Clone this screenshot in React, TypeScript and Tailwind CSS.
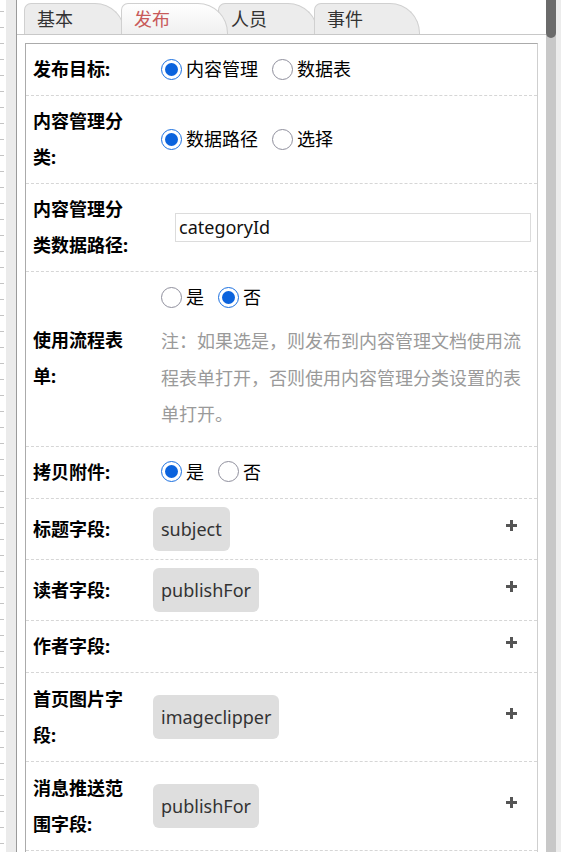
import React from "react";

const FONT = { fontFamily: '"Noto Sans", "Noto Sans CJK SC", sans-serif' };

function Radio({ checked }: { checked: boolean }) {
  if (checked) {
    return (
      <span className="ml-[8px] mr-[4px] inline-flex h-[21px] w-[21px] shrink-0 items-center justify-center rounded-full border-[1.5px] border-[#1a6fe0] bg-white">
        <span className="h-[13px] w-[13px] rounded-full bg-[#0b63dd]" />
      </span>
    );
  }
  return (
    <span className="ml-[8px] mr-[4px] inline-block h-[21px] w-[21px] shrink-0 rounded-full border border-[#8f8f9d] bg-white" />
  );
}

function RadioGroup({ items }: { items: { label: string; checked: boolean }[] }) {
  return (
    <div className="flex items-center">
      {items.map((it, i) => (
        <div key={i} className={"flex items-center " + (i > 0 ? "ml-[6px]" : "")}>
          <Radio checked={it.checked} />
          <span className="text-[18px] leading-[36px] text-black">{it.label}</span>
        </div>
      ))}
    </div>
  );
}

function Plus() {
  return (
    <svg width="11" height="11" viewBox="0 0 11 11" className="mr-[20px] -mt-[7px] shrink-0">
      <rect x="4" y="0" width="3" height="11" fill="#555" />
      <rect x="0" y="4" width="11" height="3" fill="#555" />
    </svg>
  );
}

function Chip({ text }: { text: string }) {
  return (
    <span className="inline-block h-[44px] rounded-[6px] bg-[#dedede] px-[8px] text-[18px] leading-[44px] text-[#333]">
      {text}
    </span>
  );
}

function Row({
  label,
  children,
  plus,
  className,
}: {
  label: React.ReactNode;
  children?: React.ReactNode;
  plus?: boolean;
  className?: string;
}) {
  return (
    <div
      className={
        "flex items-center border-b border-dashed border-[#d6d6d6] pt-[7px] pb-[8px] " + (className || "")
      }
    >
      <div className="w-[127px] shrink-0 pl-[7px] pr-[20px] text-[18px] font-bold leading-[36px] text-black">
        {label}
      </div>
      <div className="flex min-w-0 flex-1 items-center">{children}</div>
      {plus && <Plus />}
    </div>
  );
}

const tabs = [
  { label: "基本", w: "w-[101px]", ml: "ml-0", active: false, z: "z-[1]" },
  { label: "发布", w: "w-[107px]", ml: "-ml-[4px]", active: true, z: "z-[5]" },
  { label: "人员", w: "w-[100px]", ml: "-ml-[10px]", active: false, z: "z-[2]" },
  { label: "事件", w: "w-[106px]", ml: "-ml-[4px]", active: false, z: "z-[3]" },
];

export default function App() {
  return (
    <div className="flex h-[852px] w-[561px] overflow-hidden bg-white" style={FONT}>
      {/* left edge */}
      <div className="h-full w-[6px] shrink-0">
        <div className="h-full w-[4px] bg-[repeating-linear-gradient(to_bottom,transparent_0px,transparent_11px,#c4c4c4_11px,#c4c4c4_12px,transparent_12px,transparent_16px)]" />
      </div>
      <div className="h-full w-[11px] shrink-0 border-r border-[#9a9a9a] bg-[#ebebeb]" />

      {/* main */}
      <div className="flex h-full min-w-0 flex-1 flex-col">
        {/* tab bar */}
        <div className="flex h-[35px] shrink-0 items-end border-b border-[#c8c8c8] pl-[7px]">
          {tabs.map((t) => (
            <div
              key={t.label}
              className={
                "relative flex h-[31px] items-center rounded-tl-[7px] rounded-tr-[30px] border border-b-0 border-[#d0d0d0] pl-[12px] text-[18px] leading-none " +
                t.w +
                " " +
                t.ml +
                " " +
                t.z +
                " " +
                (t.active
                  ? "bg-gradient-to-b from-white to-[#f0f0f0] text-[#c85a5a]"
                  : "bg-[#ececec] text-[#333]")
              }
            >
              {t.label}
            </div>
          ))}
        </div>

        {/* form box */}
        <div className="ml-[8px] mr-[8px] mt-[8px] flex-1 border border-b-0 border-[#ababab] border-r-[#cfcfcf]">
          <Row label="发布目标:" className="pt-[6px] pb-[6px]">
            <RadioGroup
              items={[
                { label: "内容管理", checked: true },
                { label: "数据表", checked: false },
              ]}
            />
          </Row>
          <Row label="内容管理分类:">
            <RadioGroup
              items={[
                { label: "数据路径", checked: true },
                { label: "选择", checked: false },
              ]}
            />
          </Row>
          <Row label="内容管理分类数据路径:">
            <div className="ml-[22px] mr-[6px] flex h-[29px] flex-1 items-center border border-[#dcdcdc] bg-white pl-[3px] text-[18px] text-[#111]">
              categoryId
            </div>
          </Row>
          <Row label="使用流程表单:">
            <div className="flex flex-col">
              <RadioGroup
                items={[
                  { label: "是", checked: false },
                  { label: "否", checked: true },
                ]}
              />
              <div className="mb-[5px] ml-[8px] mt-[8px] w-[364px] text-[18px] leading-[36.5px] text-[#9a9a9a]">
                注：如果选是，则发布到内容管理文档使用流程表单打开，否则使用内容管理分类设置的表单打开。
              </div>
            </div>
          </Row>
          <Row label="拷贝附件:">
            <RadioGroup
              items={[
                { label: "是", checked: true },
                { label: "否", checked: false },
              ]}
            />
          </Row>
          <Row label="标题字段:" plus className="pt-[8px] pb-[8px]">
            <Chip text="subject" />
          </Row>
          <Row label="读者字段:" plus className="pt-[8px] pb-[8px]">
            <Chip text="publishFor" />
          </Row>
          <Row label="作者字段:" plus />
          <Row label="首页图片字段:" plus className="pt-[8px] pb-[8px]">
            <Chip text="imageclipper" />
          </Row>
          <Row label="消息推送范围字段:" plus className="pt-[8px] pb-[8px]">
            <Chip text="publishFor" />
          </Row>
        </div>
      </div>

      {/* scrollbar */}
      <div className="flex h-full w-[15px] shrink-0">
        <div className="h-full w-[10px] bg-[#c8c8c8]">
          <div className="h-[38px] w-full rounded-b-[5px] bg-[#6b6b6b]" />
        </div>
        <div className="h-full w-[5px] bg-[#ececec]" />
      </div>
    </div>
  );
}
